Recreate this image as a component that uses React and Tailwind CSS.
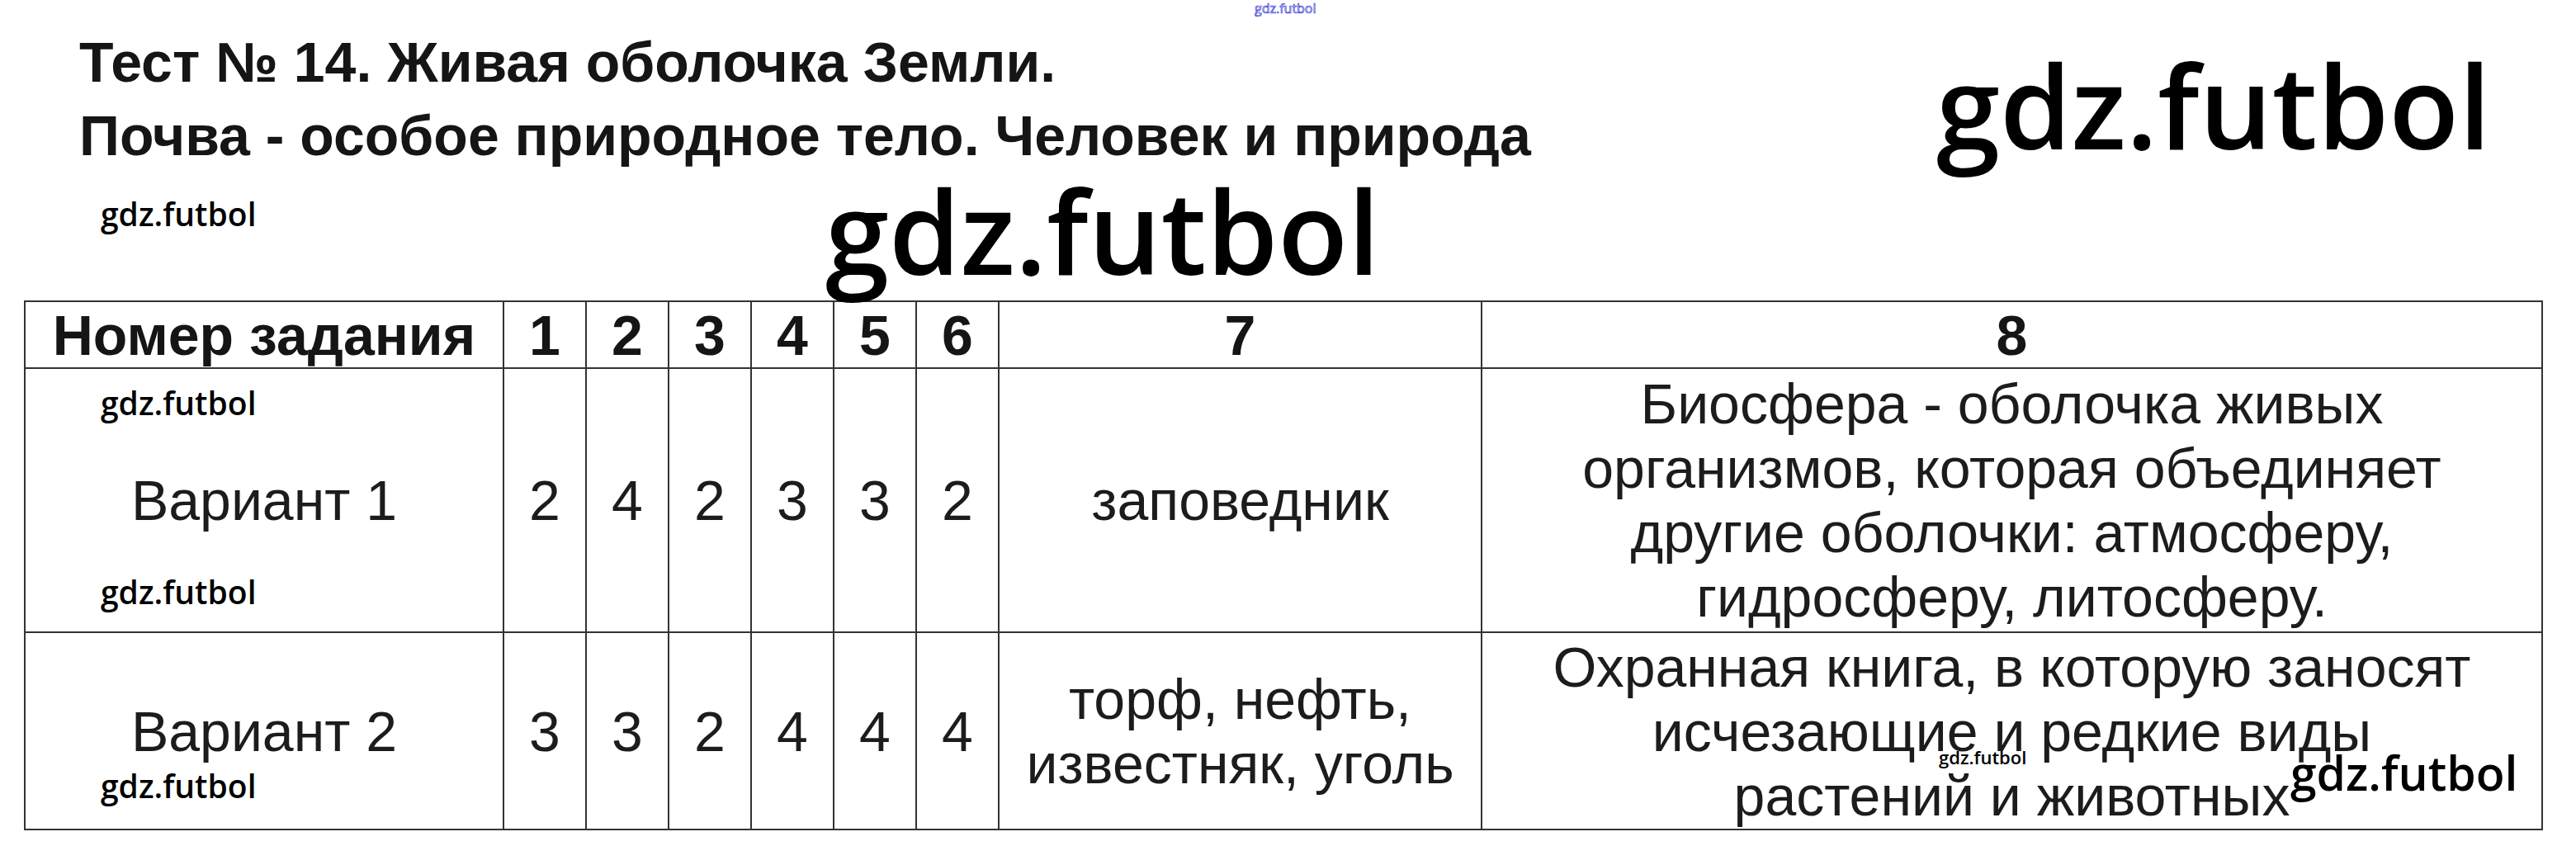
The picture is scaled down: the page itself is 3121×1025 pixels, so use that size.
import React from 'react';

// watermark overlays stamped over the scanned page
const marks = [
  { text: 'gdz.futbol', cls: 'left-[122px] top-[239px] text-[39px]' },
  { text: 'gdz.futbol', cls: 'left-[1000px] top-[210px] text-[139px]' },
  { text: 'gdz.futbol', cls: 'left-[2346px] top-[58px] text-[139px]' },
  { text: 'gdz.futbol', cls: 'left-[122px] top-[468px] text-[39px]' },
  { text: 'gdz.futbol', cls: 'left-[122px] top-[697px] text-[39px]' },
  { text: 'gdz.futbol', cls: 'left-[122px] top-[932px] text-[39px]' },
  { text: 'gdz.futbol', cls: 'left-[2349px] top-[906px] text-[22px]' },
  { text: 'gdz.futbol', cls: 'left-[2775px] top-[908px] text-[57px]' },
];

const variants = [
  {
    name: 'Вариант 1',
    answers: ['2', '4', '2', '3', '3', '2'],
    seven: ['заповедник'],
    eight: [
      'Биосфера - оболочка живых',
      'организмов, которая объединяет',
      'другие оболочки: атмосферу,',
      'гидросферу, литосферу.',
    ],
    height: 'h-[320px]',
  },
  {
    name: 'Вариант 2',
    answers: ['3', '3', '2', '4', '4', '4'],
    seven: ['торф, нефть,', 'известняк, уголь'],
    eight: [
      'Охранная книга, в которую заносят',
      'исчезающие и редкие виды',
      'растений и животных',
    ],
    height: 'h-[239px]',
  },
];

const cell = 'border-2 border-[#333] text-center align-middle p-0';

export default function App() {
  return (
    <div className="relative w-[3121px] h-[1025px] overflow-hidden bg-white text-[#1c1c1c] font-['Liberation_Sans',Arial,sans-serif]">
      {/* Title */}
      <div className="pl-[96px] pt-[31px] text-[68px] leading-[89px] font-bold text-[#151515]">
        <p>Тест № 14. Живая оболочка Земли.</p>
        <p>Почва - особое природное тело. Человек и природа</p>
      </div>

      {/* Answer table */}
      <table className="ml-[29px] mt-[155px] w-[3052px] table-fixed border-collapse text-[68px] leading-[78px]">
        <colgroup>
          <col className="w-[580px]" />
          <col className="w-[100px]" />
          <col className="w-[100px]" />
          <col className="w-[100px]" />
          <col className="w-[100px]" />
          <col className="w-[100px]" />
          <col className="w-[100px]" />
          <col className="w-[585px]" />
          <col />
        </colgroup>
        <thead>
          <tr className="h-[81px] font-bold leading-[70px] text-[#151515]">
            <td className={cell}>Номер задания</td>
            {['1', '2', '3', '4', '5', '6', '7', '8'].map((n) => (
              <td key={n} className={cell}>
                {n}
              </td>
            ))}
          </tr>
        </thead>
        <tbody>
          {variants.map((v) => (
            <tr key={v.name} className={v.height}>
              <td className={cell}>{v.name}</td>
              {v.answers.map((a, i) => (
                <td key={i} className={cell}>
                  {a}
                </td>
              ))}
              <td className={cell}>
                {v.seven.map((line) => (
                  <div key={line}>{line}</div>
                ))}
              </td>
              <td className={cell}>
                {v.eight.map((line) => (
                  <div key={line}>{line}</div>
                ))}
              </td>
            </tr>
          ))}
        </tbody>
      </table>

      {/* Watermarks */}
      <div className="absolute left-[1520px] top-[2px] text-[16px] leading-none font-['Open_Sans',sans-serif] text-white [-webkit-text-stroke:0.7px_#3434d4]">
        gdz.futbol
      </div>
      {marks.map((m, i) => (
        <div
          key={i}
          className={`absolute leading-none font-semibold text-black font-['Open_Sans',sans-serif] ${m.cls}`}
        >
          {m.text}
        </div>
      ))}
    </div>
  );
}
